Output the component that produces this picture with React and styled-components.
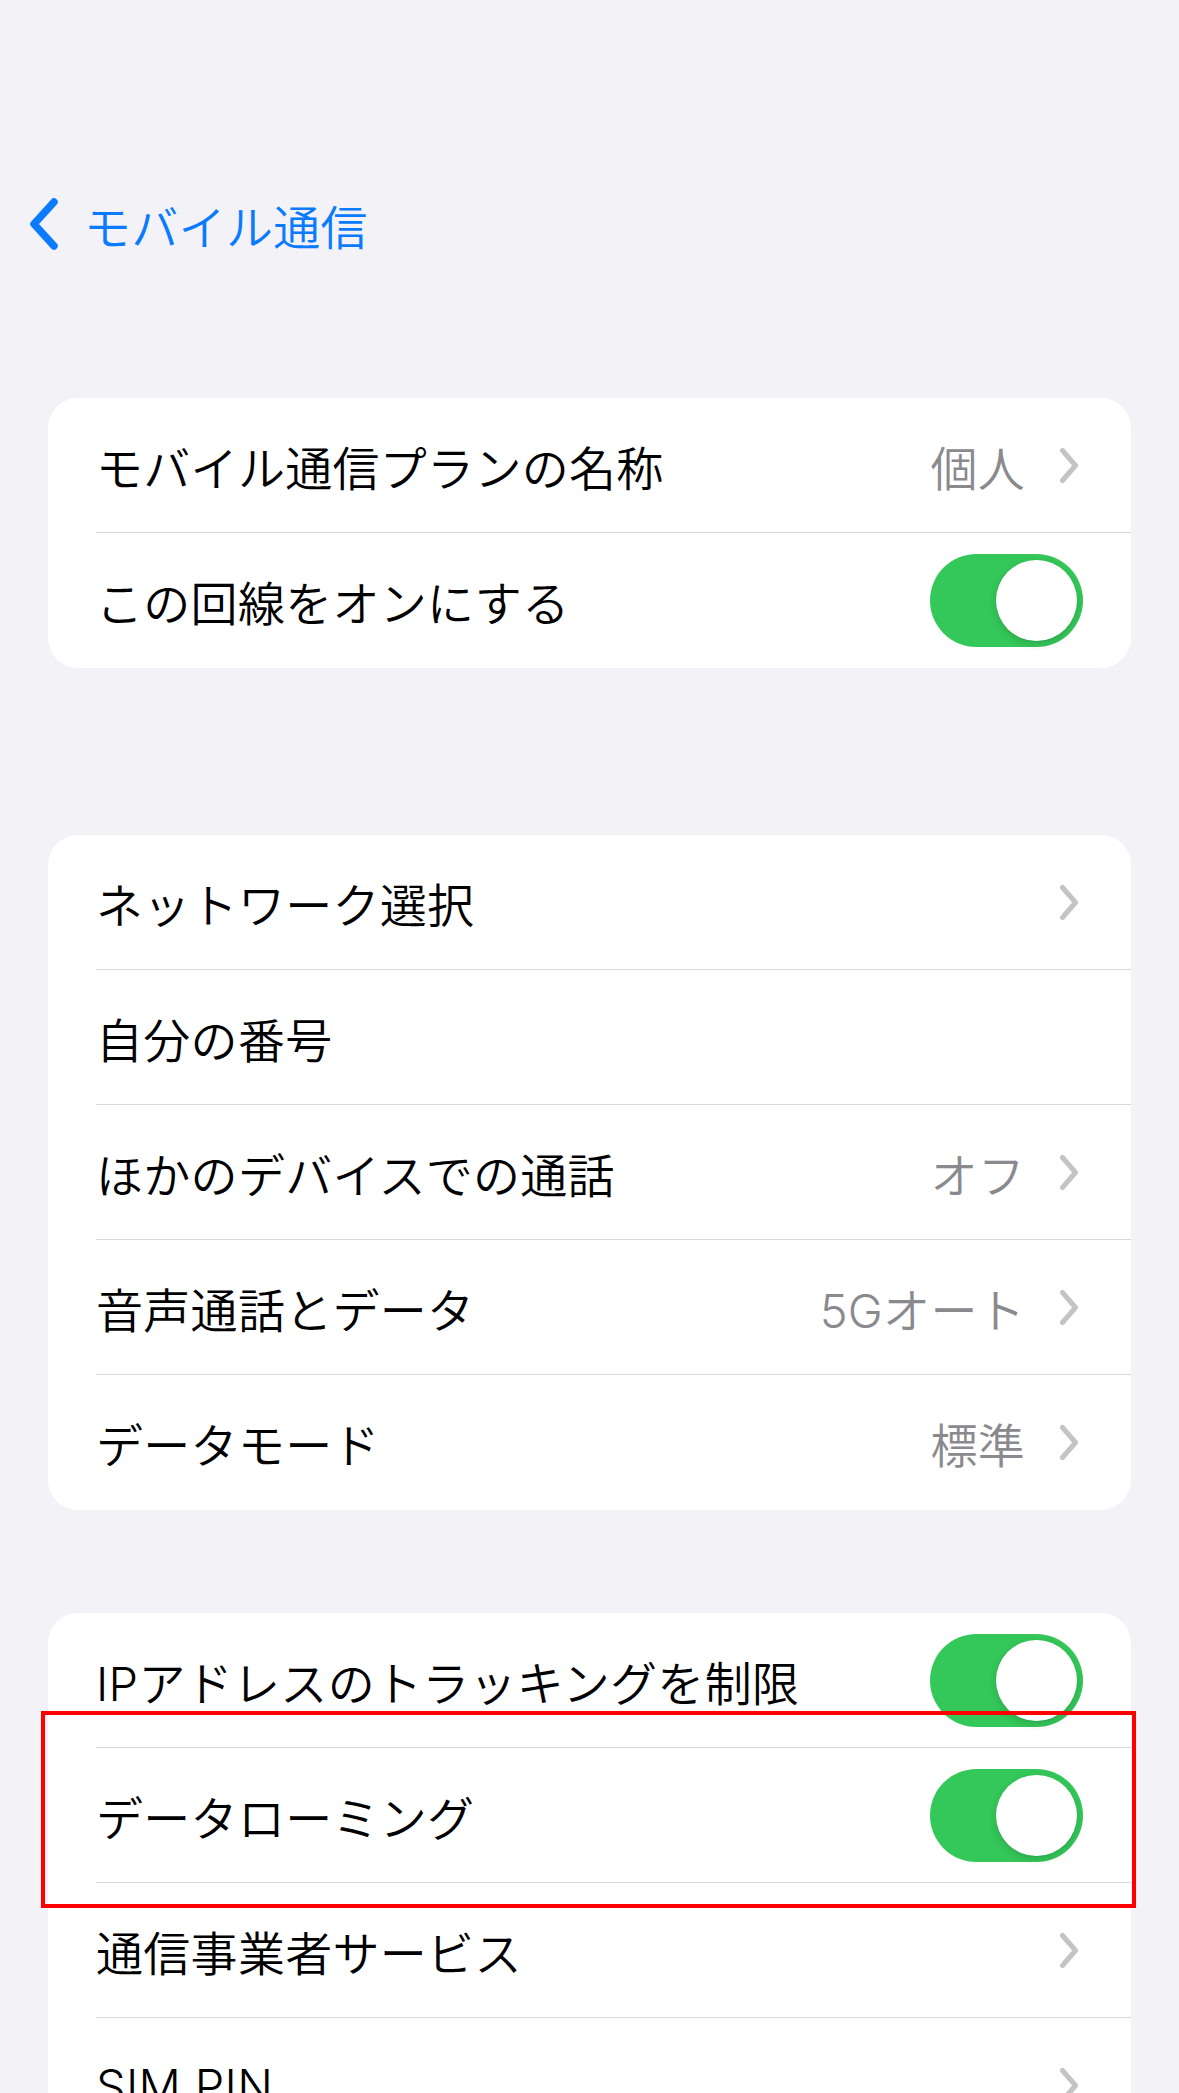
import React from 'react';
import styled, { createGlobalStyle } from 'styled-components';

const GlobalStyle = createGlobalStyle`
  body {
    margin: 0;
    background: #f2f2f7;
    font-family: Inter, "Noto Sans CJK JP", sans-serif;
    -webkit-font-smoothing: antialiased;
  }
`;

const Page = styled.div`
  min-height: 2093px;
  background: #f2f2f7;
  overflow: hidden;
`;

const NavBar = styled.div`
  display: flex;
  align-items: center;
  height: 64px;
  padding: 192px 0 0 29px;
`;

const BackButton = styled.div`
  display: flex;
  align-items: center;
  gap: 24px;
  color: #0a7aff;
  font-size: 47px;
  font-weight: 350;
  letter-spacing: 0.3px;
`;

const Section = styled.div`
  margin: ${(p) => p.$top}px 48px 0;
  background: #ffffff;
  border-radius: 30px;
  display: flex;
  flex-direction: column;
`;

const Row = styled.div`
  position: relative;
  display: flex;
  align-items: center;
  height: 135px;
  padding: 0 48px;
  box-sizing: border-box;

  &:not(:last-child)::after {
    content: '';
    position: absolute;
    bottom: 0;
    left: 48px;
    right: 0;
    height: 1.5px;
    background: #d9d9dc;
  }
`;

const Label = styled.span`
  flex: 1;
  font-size: 47px;
  font-weight: 350;
  color: #000;
  letter-spacing: 0.3px;
  white-space: nowrap;
`;

const Value = styled.span`
  font-size: 47px;
  font-weight: 350;
  color: #8a8a8e;
  margin-right: 34px;
  letter-spacing: 0.3px;
`;

const ChevronWrap = styled.span`
  display: flex;
  margin-right: 4px;
`;

const Toggle = styled.div`
  width: 153px;
  height: 93px;
  border-radius: 47px;
  background: #34c759;
  display: flex;
  align-items: center;
  justify-content: flex-end;
  padding: 0 6px;
  box-sizing: border-box;
`;

const Knob = styled.div`
  width: 81px;
  height: 81px;
  border-radius: 50%;
  background: #fff;
  box-shadow: 0 3px 8px rgba(0, 0, 0, 0.15), 0 1px 1px rgba(0, 0, 0, 0.06);
`;

const Highlight = styled.div`
  position: absolute;
  top: -37px;
  bottom: -25px;
  left: -7px;
  right: -5px;
  border: 4px solid #ff0000;
  z-index: 2;
  pointer-events: none;
`;

const BackChevron = () => (
  <svg width="31" height="54" viewBox="0 0 31 54">
    <path d="M25 5 L5 27 L25 49" fill="none" stroke="#0a7aff" strokeWidth="7.5" strokeLinecap="round" strokeLinejoin="round" />
  </svg>
);

const Chevron = () => (
  <ChevronWrap>
    <svg width="20" height="37" viewBox="0 0 20 37">
      <path d="M3.5 3.5 L16.5 18.5 L3.5 33.5" fill="none" stroke="#c4c4c7" strokeWidth="5" strokeLinecap="round" strokeLinejoin="round" />
    </svg>
  </ChevronWrap>
);

const SwitchControl = () => (
  <Toggle>
    <Knob />
  </Toggle>
);

const Item = ({ label, value, chevron, toggle, highlight }) => (
  <Row>
    <Label>{label}</Label>
    {value && <Value>{value}</Value>}
    {chevron && <Chevron />}
    {toggle && <SwitchControl />}
    {highlight && <Highlight />}
  </Row>
);

export default function App() {
  return (
    <Page>
      <GlobalStyle />
      <NavBar>
        <BackButton>
          <BackChevron />
          <span>モバイル通信</span>
        </BackButton>
      </NavBar>

      <Section $top={142}>
        <Item label="モバイル通信プランの名称" value="個人" chevron />
        <Item label="この回線をオンにする" toggle />
      </Section>

      <Section $top={167}>
        <Item label="ネットワーク選択" chevron />
        <Item label="自分の番号" />
        <Item label="ほかのデバイスでの通話" value="オフ" chevron />
        <Item label="音声通話とデータ" value="5Gオート" chevron />
        <Item label="データモード" value="標準" chevron />
      </Section>

      <Section $top={103}>
        <Item label="IPアドレスのトラッキングを制限" toggle />
        <Item label="データローミング" toggle highlight />
        <Item label="通信事業者サービス" chevron />
        <Item label="SIM PIN" chevron />
      </Section>
    </Page>
  );
}
